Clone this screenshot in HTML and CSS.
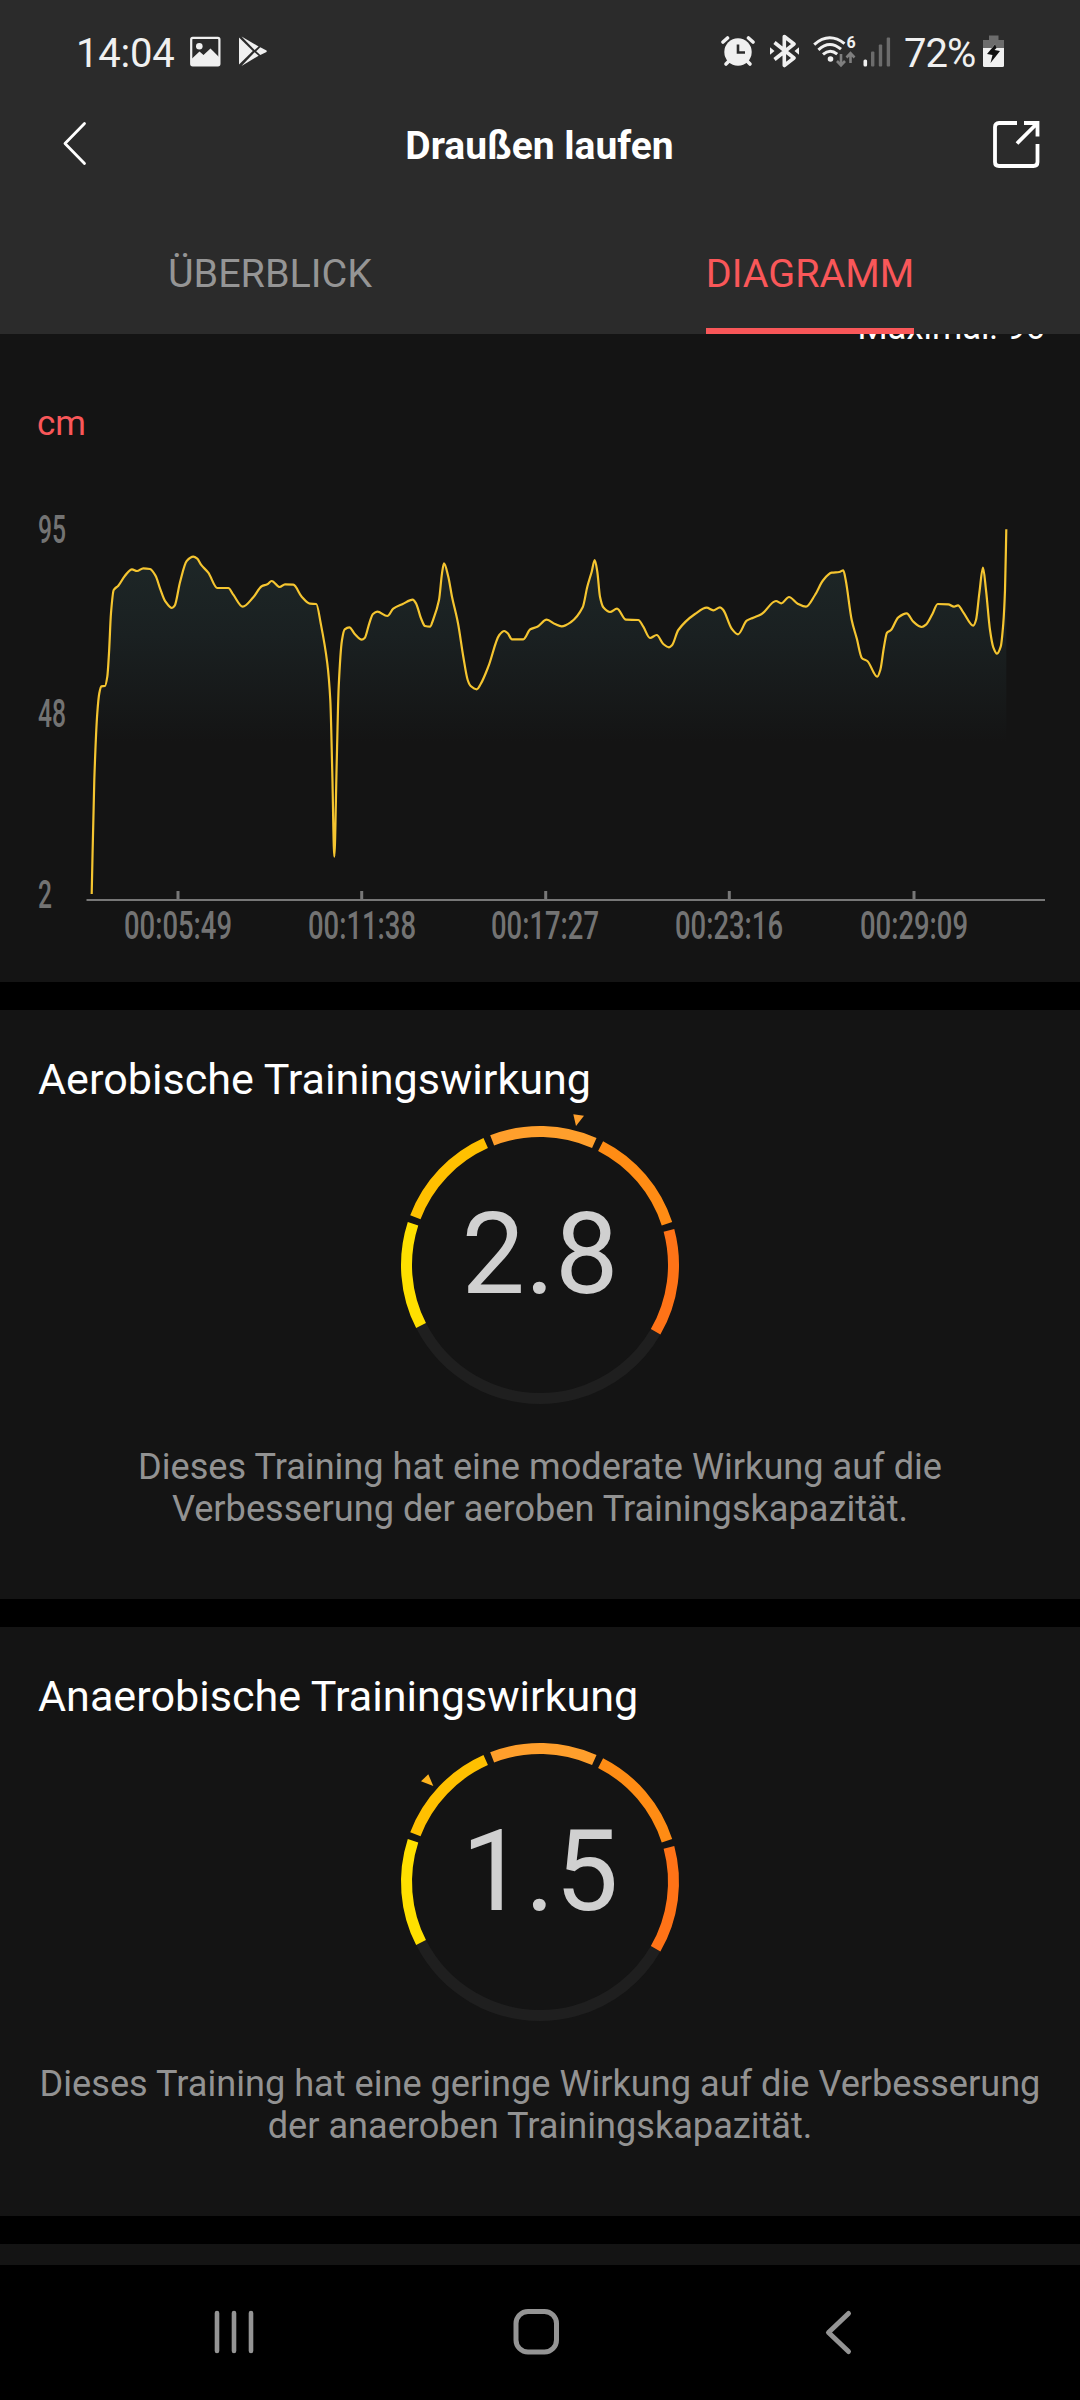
FILE: index.html
```
<!DOCTYPE html>
<html lang="de">
<head>
    <meta charset="UTF-8">
    <meta name="viewport" content="width=device-width, initial-scale=1.0">
    <title>Draußen laufen</title>
    <link rel="stylesheet" href="styles.css">
</head>
<body>
    <header>
        <div class="status-bar">
            <span class="time">14:04</span>
            <svg class="icon-picture" width="31" height="34" viewBox="0 0 31 34">
                <rect x="1.2" y="3.9" width="28.2" height="27.4" rx="1.5" fill="none" stroke="#f0f0f0" stroke-width="2.2"/>
                <circle cx="9.3" cy="12.3" r="3.3" fill="#f0f0f0"/>
                <path d="M1.5 25 L9.5 17.5 L13.5 21 L20.5 14.5 L29 23 V31 H1.5 Z" fill="#f0f0f0"/>
            </svg>
            <svg class="icon-play" width="28" height="34" viewBox="0 0 28 34" fill="#f0f0f0">
                <path d="M0 3.5 L13.8 17 L0 30.5 Z"/>
                <path d="M2.5 2.6 L19.6 12.5 L15.6 16 Z"/>
                <path d="M2.5 32 L19.6 21.8 L15.6 18.2 Z"/>
                <path d="M21.3 13.3 L27.5 16.4 Q28 17.2 27.5 18 L21.3 21 L17.2 17.2 Z"/>
            </svg>
            <div class="status-right">
                <svg class="icon-alarm" width="34" height="34" viewBox="0 0 34 34">
                    <g stroke="#f0f0f0" stroke-width="3.6" stroke-linecap="round">
                        <path d="M2 8 L6.5 4"/>
                        <path d="M27.5 4 L32 8"/>
                        <path d="M8 27 L5 30"/>
                        <path d="M26 27 L29 30"/>
                    </g>
                    <circle cx="17" cy="18" r="13.7" fill="#f0f0f0"/>
                    <path d="M17 10.5 V18.5 H24" fill="none" stroke="#2b2b2b" stroke-width="2.6"/>
                </svg>
                <svg class="icon-bluetooth" width="29" height="34" viewBox="0 0 29 34">
                    <path d="M4.5 8.5 L24 24 L14.3 31.5 V2.5 L24 10 L4.5 25.5" fill="none" stroke="#f0f0f0" stroke-width="3.6" stroke-linejoin="round"/>
                    <path d="M0 13.3 L4.5 17 L0 20.7 Z M29 13.3 L24.5 17 L29 20.7 Z" fill="#f0f0f0"/>
                </svg>
                <svg class="icon-wifi" width="43" height="34" viewBox="0 0 43 34">
                    <g fill="none" stroke="#f0f0f0" stroke-width="3">
                        <path d="M1.2 10.6 Q16 -2.5 31.5 9.6"/>
                        <path d="M5.4 15.8 Q16.5 5.5 28 15.2"/>
                        <path d="M10 20.4 Q17 14.2 24.2 20.2"/>
                    </g>
                    <circle cx="17.5" cy="25" r="2.8" fill="#f0f0f0"/>
                    <text class="wifi-six" x="33.6" y="13.8">6</text>
                    <path d="M28 20 V31 M24 27 L28 31.3 L32 27 M37.5 29 V19.5 M33.5 23.5 L37.5 19.2 L41.5 23.5" fill="none" stroke="#7f7f7f" stroke-width="2.6"/>
                </svg>
                <svg class="icon-signal" width="28" height="34" viewBox="0 0 28 34">
                    <rect x="0.5" y="25.5" width="3.6" height="7" rx="1.5" fill="#f0f0f0"/>
                    <g fill="#6c6c6c">
                        <rect x="8" y="17.5" width="3.4" height="15" rx="1"/>
                        <rect x="15.8" y="10.5" width="3.4" height="22" rx="1"/>
                        <rect x="23.7" y="3.5" width="3.4" height="29" rx="1"/>
                    </g>
                </svg>
                <span class="percent">72%</span>
                <svg class="icon-battery" width="21" height="34" viewBox="0 0 21 34">
                    <path d="M6 1.5 H15.5 V6 H21 V14.5 H0 V6 H6 Z" fill="#6c6c6c"/>
                    <path d="M0 14 H21 V31.5 Q21 33 19.5 33 H1.5 Q0 33 0 31.5 Z" fill="#f0f0f0"/>
                    <path d="M12.5 9.5 L10 14 H8.9 Z" fill="#f0f0f0"/>
                    <path d="M12 10.5 L4 20 L9.5 21 L7.5 29 L17 17 L11.5 16 L13.5 14 Z" fill="#111111"/>
                </svg>
            </div>
        </div>
        <div class="title-bar">
            <svg width="24" height="46" viewBox="0 0 24 46">
                <path d="M21.5 2.5 L2 22.5 L21.5 42.5" fill="none" stroke="#ffffff" stroke-width="2.8" stroke-linecap="round" stroke-linejoin="round"/>
            </svg>
            <h1>Draußen laufen</h1>
            <svg width="47" height="47" viewBox="0 0 47 47">
                <path d="M24 2 H6 Q2 2 2 6 V41 Q2 45 6 45 H40.5 Q44.5 45 44.5 41 V23" fill="none" stroke="#ffffff" stroke-width="3.8"/>
                <path d="M31 2 H44.5 V15.5 M44 2.5 L24 22.5" fill="none" stroke="#ffffff" stroke-width="3.8"/>
            </svg>
        </div>
        <nav class="tabs">
            <div class="tab"><span>ÜBERBLICK</span></div>
            <div class="tab active"><span>DIAGRAMM</span></div>
        </nav>
    </header>
    <main>
        <section class="chart-card">
            <div class="maximum">Maximal: 96</div>
            <div class="unit">cm</div>
            <svg class="chart" width="1080" height="480" viewBox="0 0 1080 480">
                <defs>
                    <linearGradient id="areaFill" gradientUnits="userSpaceOnUse" x1="0" y1="50" x2="0" y2="262">
                        <stop offset="0" stop-color="#1f2929"/>
                        <stop offset="0.5" stop-color="#1a2021"/>
                        <stop offset="1" stop-color="#141414"/>
                    </linearGradient>
                </defs>
                <path id="area" fill="url(#areaFill)"/>
                <path id="line" class="line"/>
                <path class="axis" d="M86.5 420 H1045"/>
                <path class="ticks" d="M178 411 V420 M361.7 411 V420 M545.7 411 V420 M729.3 411 V420 M914 411 V420"/>
                <g class="labels">
                    <text x="38" y="62.5" textLength="28" lengthAdjust="spacingAndGlyphs">95</text>
                    <text x="38" y="246.5" textLength="28" lengthAdjust="spacingAndGlyphs">48</text>
                    <text x="38" y="428" textLength="14" lengthAdjust="spacingAndGlyphs">2</text>
                    <text x="124" y="459" textLength="108" lengthAdjust="spacingAndGlyphs">00:05:49</text>
                    <text x="308" y="459" textLength="108" lengthAdjust="spacingAndGlyphs">00:11:38</text>
                    <text x="491" y="459" textLength="108" lengthAdjust="spacingAndGlyphs">00:17:27</text>
                    <text x="675" y="459" textLength="108" lengthAdjust="spacingAndGlyphs">00:23:16</text>
                    <text x="860" y="459" textLength="108" lengthAdjust="spacingAndGlyphs">00:29:09</text>
                </g>
            </svg>
        </section>
        <section class="effect-card">
            <h2>Aerobische Trainingswirkung</h2>
            <div class="gauge">
                <svg width="320" height="320" viewBox="-160 -160 320 320">
                    <circle class="track" r="133.5" pathLength="360" transform="rotate(30)"/>
                    <circle class="seg seg-1" r="133.5" pathLength="360" transform="rotate(153)"/>
                    <circle class="seg seg-2" r="133.5" pathLength="360" transform="rotate(201)"/>
                    <circle class="seg seg-3" r="133.5" pathLength="360" transform="rotate(249)"/>
                    <circle class="seg seg-4" r="133.5" pathLength="360" transform="rotate(297)"/>
                    <circle class="seg seg-5" r="133.5" pathLength="360" transform="rotate(345)"/>
                    <path d="M33.3 -150.7 L44 -149.2 L36 -139 Z" fill="#ff9f2c"/>
                </svg>
                <span class="value">2.8</span>
            </div>
            <p>Dieses Training hat eine moderate Wirkung auf die<br>Verbesserung der aeroben Trainingskapazität.</p>
        </section>
        <section class="effect-card">
            <h2>Anaerobische Trainingswirkung</h2>
            <div class="gauge">
                <svg width="320" height="320" viewBox="-160 -160 320 320">
                    <circle class="track" r="133.5" pathLength="360" transform="rotate(30)"/>
                    <circle class="seg seg-1" r="133.5" pathLength="360" transform="rotate(153)"/>
                    <circle class="seg seg-2" r="133.5" pathLength="360" transform="rotate(201)"/>
                    <circle class="seg seg-3" r="133.5" pathLength="360" transform="rotate(249)"/>
                    <circle class="seg seg-4" r="133.5" pathLength="360" transform="rotate(297)"/>
                    <circle class="seg seg-5" r="133.5" pathLength="360" transform="rotate(345)"/>
                    <path d="M-119 -100.7 L-111.7 -107.7 L-106.7 -96 Z" fill="#ffb41e"/>
                </svg>
                <span class="value">1.5</span>
            </div>
            <p>Dieses Training hat eine geringe Wirkung auf die Verbesserung<br>der anaeroben Trainingskapazität.</p>
        </section>
        <section class="next-card"></section>
    </main>
    <footer>
        <svg width="1080" height="135" viewBox="0 0 1080 135" fill="none" stroke="#949494" stroke-linecap="round" stroke-linejoin="round">
            <path d="M217 48 V86 M234 48 V86 M251 48 V86" stroke-width="4.6"/>
            <rect x="516" y="46.5" width="40.5" height="40.5" rx="12" stroke-width="5"/>
            <path d="M848.5 48.5 L828.5 67.5 L848.5 86.5" stroke-width="5"/>
        </svg>
    </footer>
    <script>
        // stride length samples: x, y inside the chart
        const points = [
            [91.7, 414], [94.3, 300], [97.3, 233], [99.3, 213.3], [101.3, 206.3], [105, 206], [107.3, 196.7], [109, 173], [111, 133], [113.7, 110],
            [118.3, 105.7], [125, 95.7], [132, 89.3], [137, 91], [143.3, 88.3], [150, 89], [155.7, 96], [160, 108.3], [165.3, 121.3], [172, 128],
            [174.7, 125.7], [180, 102.3], [186.7, 81], [193.3, 76.7], [197.3, 78.7], [201, 84.7], [208.3, 92.7], [217.3, 108], [228.3, 108], [233.3, 114.7],
            [242.7, 126.7], [253.3, 117.3], [261.7, 106.3], [267.3, 104.3], [271.7, 101], [279.7, 107], [285, 104.3], [293.3, 104.7], [301.7, 116.7], [310, 123.7],
            [316.3, 124], [320.7, 143.3], [327.3, 183.3], [330.3, 220], [332.3, 293.3], [334.3, 376.7], [336.7, 283.3], [338.7, 206.7], [342, 160], [344.7, 149.3],
            [349.3, 147.3], [355, 154.3], [361.7, 159.7], [364.7, 158], [369.3, 143.3], [373, 134], [377.3, 131.7], [387.3, 136], [393.3, 128.7], [402.7, 124],
            [412.7, 119.7], [416, 123.3], [421, 138.3], [425, 146], [430, 146.7], [433.3, 139.3], [439, 120], [442, 93.3], [444, 83.3], [448.3, 96.7],
            [452, 116.7], [458, 143.3], [463.3, 176.7], [467.7, 200], [470.7, 206], [476.7, 209.3], [480.7, 204], [488.3, 186.7], [499.3, 155], [504.3, 151],
            [507.7, 153.3], [512, 159.3], [523.3, 159.3], [530.3, 149.3], [537.3, 146.7], [546.7, 139.7], [555, 144], [561.7, 146.3], [571, 142], [582.7, 127.3],
            [587.3, 106.7], [591.7, 91.7], [594.7, 80], [597.3, 91.7], [600, 116.7], [603.3, 127.3], [610, 132], [617, 128.7], [626, 139.7], [638.3, 140],
            [643.3, 146.7], [650, 158], [656.7, 155], [663.3, 164], [669, 167.3], [672, 165.3], [678.3, 150], [695, 134], [706.7, 127.7], [713.3, 130.3],
            [720, 127.3], [723.3, 130], [731.7, 148.7], [738, 154.3], [746.7, 140.7], [753.3, 137.7], [761.7, 134], [776, 121], [781.3, 123.3], [789, 117],
            [797.7, 123.7], [806, 126.7], [815, 115], [823.3, 100], [831.7, 92.7], [839.3, 92], [843.3, 90.3], [845.7, 100], [851.7, 140], [856.7, 158.3],
            [862, 178.3], [867.3, 181], [877.3, 196.7], [880.3, 190], [884, 166.7], [887, 152.7], [891, 150], [898.3, 137.3], [906.7, 133.3], [913.3, 141.7],
            [921.7, 147], [926, 144.7], [932.3, 134.3], [937.7, 124], [948.3, 124.3], [954, 126.7], [958, 125.3], [963.3, 132.3], [973.3, 145.7], [976, 140],
            [979.3, 113.3], [983, 87.7], [986, 110], [990, 150], [993.3, 167.3], [997, 173.7], [1000.7, 166.7], [1003.3, 143.3], [1005, 110], [1006.3, 49.3]
        ];

        function slope(i) {
            if (i === 0 || i === points.length - 1) {
                const a = points[i === 0 ? 0 : i - 1];
                const b = points[i === 0 ? 1 : i];
                return (b[1] - a[1]) / (b[0] - a[0]);
            }
            const left = (points[i][1] - points[i - 1][1]) / (points[i][0] - points[i - 1][0]);
            const right = (points[i + 1][1] - points[i][1]) / (points[i + 1][0] - points[i][0]);
            // flat at peaks and valleys
            if (left * right <= 0) {
                return 0;
            }
            return 2 * left * right / (left + right);
        }

        let path = `M${points[0][0]} ${points[0][1]}`;
        for (let i = 1; i < points.length; i++) {
            const [x0, y0] = points[i - 1];
            const [x1, y1] = points[i];
            const third = (x1 - x0) / 3;
            path += ` C${x0 + third} ${y0 + slope(i - 1) * third} ${x1 - third} ${y1 - slope(i) * third} ${x1} ${y1}`;
        }

        document.getElementById("line").setAttribute("d", path);
        document.getElementById("area").setAttribute("d", path + " V420 H91.7 Z");
    </script>
</body>
</html>
```
FILE: styles.css
```
body {
    font-family: Roboto, sans-serif;
    background-color: #000000;
    color: #ffffff;
    margin: 0;
    padding: 0;
    width: 1080px;
    height: 2400px;
    overflow: hidden;
    display: flex;
    flex-direction: column;
}
svg {
    display: block;
    flex: none;
}
header {
    background-color: #2b2b2b;
    height: 334px;
    flex: none;
    position: relative;
    z-index: 1;
}
.status-bar {
    display: flex;
    align-items: center;
    height: 34px;
    padding: 34px 76px 0 76px;
    color: #f0f0f0;
    font-size: 40px;
    line-height: 34px;
}
.time {
    width: 114px;
    padding-top: 5px;
    letter-spacing: -0.2px;
}
.icon-play {
    margin-left: 18px;
}
.status-right {
    display: flex;
    align-items: center;
    margin-left: auto;
}
.icon-bluetooth {
    margin-left: 15px;
}
.icon-wifi {
    margin-left: 14px;
}
.wifi-six {
    font-size: 16px;
    font-weight: bold;
    fill: #f0f0f0;
}
.icon-signal {
    margin-left: 7px;
}
.percent {
    width: 79px;
    margin-left: 13px;
    padding-top: 5px;
    letter-spacing: -1px;
}
.title-bar {
    display: flex;
    align-items: center;
    justify-content: space-between;
    height: 152px;
    padding: 0 40px 0 63px;
}
.title-bar h1 {
    margin: 4px 0 0 -1px;
    font-size: 39px;
    font-weight: bold;
}
.tabs {
    display: flex;
    height: 114px;
}
.tab {
    flex: 1;
    display: flex;
    justify-content: center;
    color: #959595;
    font-size: 39.5px;
    font-weight: normal;
}
.tab span {
    padding-top: 30px;
    box-sizing: border-box;
    height: 114px;
}
.tab.active span {
    color: #f95759;
    border-bottom: 6px solid #f95759;
}
main {
    display: flex;
    flex-direction: column;
    gap: 28px;
    height: 1931px;
    overflow: visible;
}
main section {
    background-color: #141414;
    flex: none;
}
.chart-card {
    height: 648px;
}
.maximum {
    height: 38px;
    margin-top: -28px;
    padding-right: 35px;
    text-align: right;
    font-size: 34.5px;
    line-height: 42px;
}
.unit {
    height: 42px;
    padding: 59px 0 35px 37px;
    color: #f95759;
    font-size: 35px;
    line-height: 42px;
}
.line {
    fill: none;
    stroke: #f5c530;
    stroke-width: 2.2;
    stroke-linejoin: round;
}
.axis {
    stroke: #777777;
    stroke-width: 2;
}
.ticks {
    stroke: #777777;
    stroke-width: 3;
}
.labels {
    fill: #737373;
    font-size: 38px;
    font-weight: 500;
}
.effect-card {
    height: 589px;
}
.effect-card h2 {
    margin: 0;
    padding: 45px 0 0 38px;
    height: 50px;
    font-size: 43.1px;
    font-weight: normal;
    line-height: 50px;
}
.gauge {
    position: relative;
    width: 320px;
    height: 320px;
    margin: 0 auto;
}
.track,
.seg {
    fill: none;
    stroke-width: 11;
}
.track {
    stroke: #1f1f1f;
    stroke-dasharray: 123 237;
}
.seg {
    stroke-dasharray: 45 315;
}
.seg-1 {
    stroke: #ffe000;
}
.seg-2 {
    stroke: #ffc000;
}
.seg-3 {
    stroke: #ff9f2c;
}
.seg-4 {
    stroke: #ff8c14;
}
.seg-5 {
    stroke: #ff7317;
}
.value {
    position: absolute;
    top: 82px;
    left: 0;
    width: 320px;
    text-align: center;
    color: #d0d0d0;
    font-size: 113px;
    line-height: 136px;
}
.effect-card p {
    margin: 0;
    padding-top: 21px;
    text-align: center;
    color: #929292;
    font-size: 36.15px;
    line-height: 42px;
    white-space: nowrap;
}
.next-card {
    height: 21px;
}
footer {
    height: 135px;
    flex: none;
    background-color: #000000;
}
```
